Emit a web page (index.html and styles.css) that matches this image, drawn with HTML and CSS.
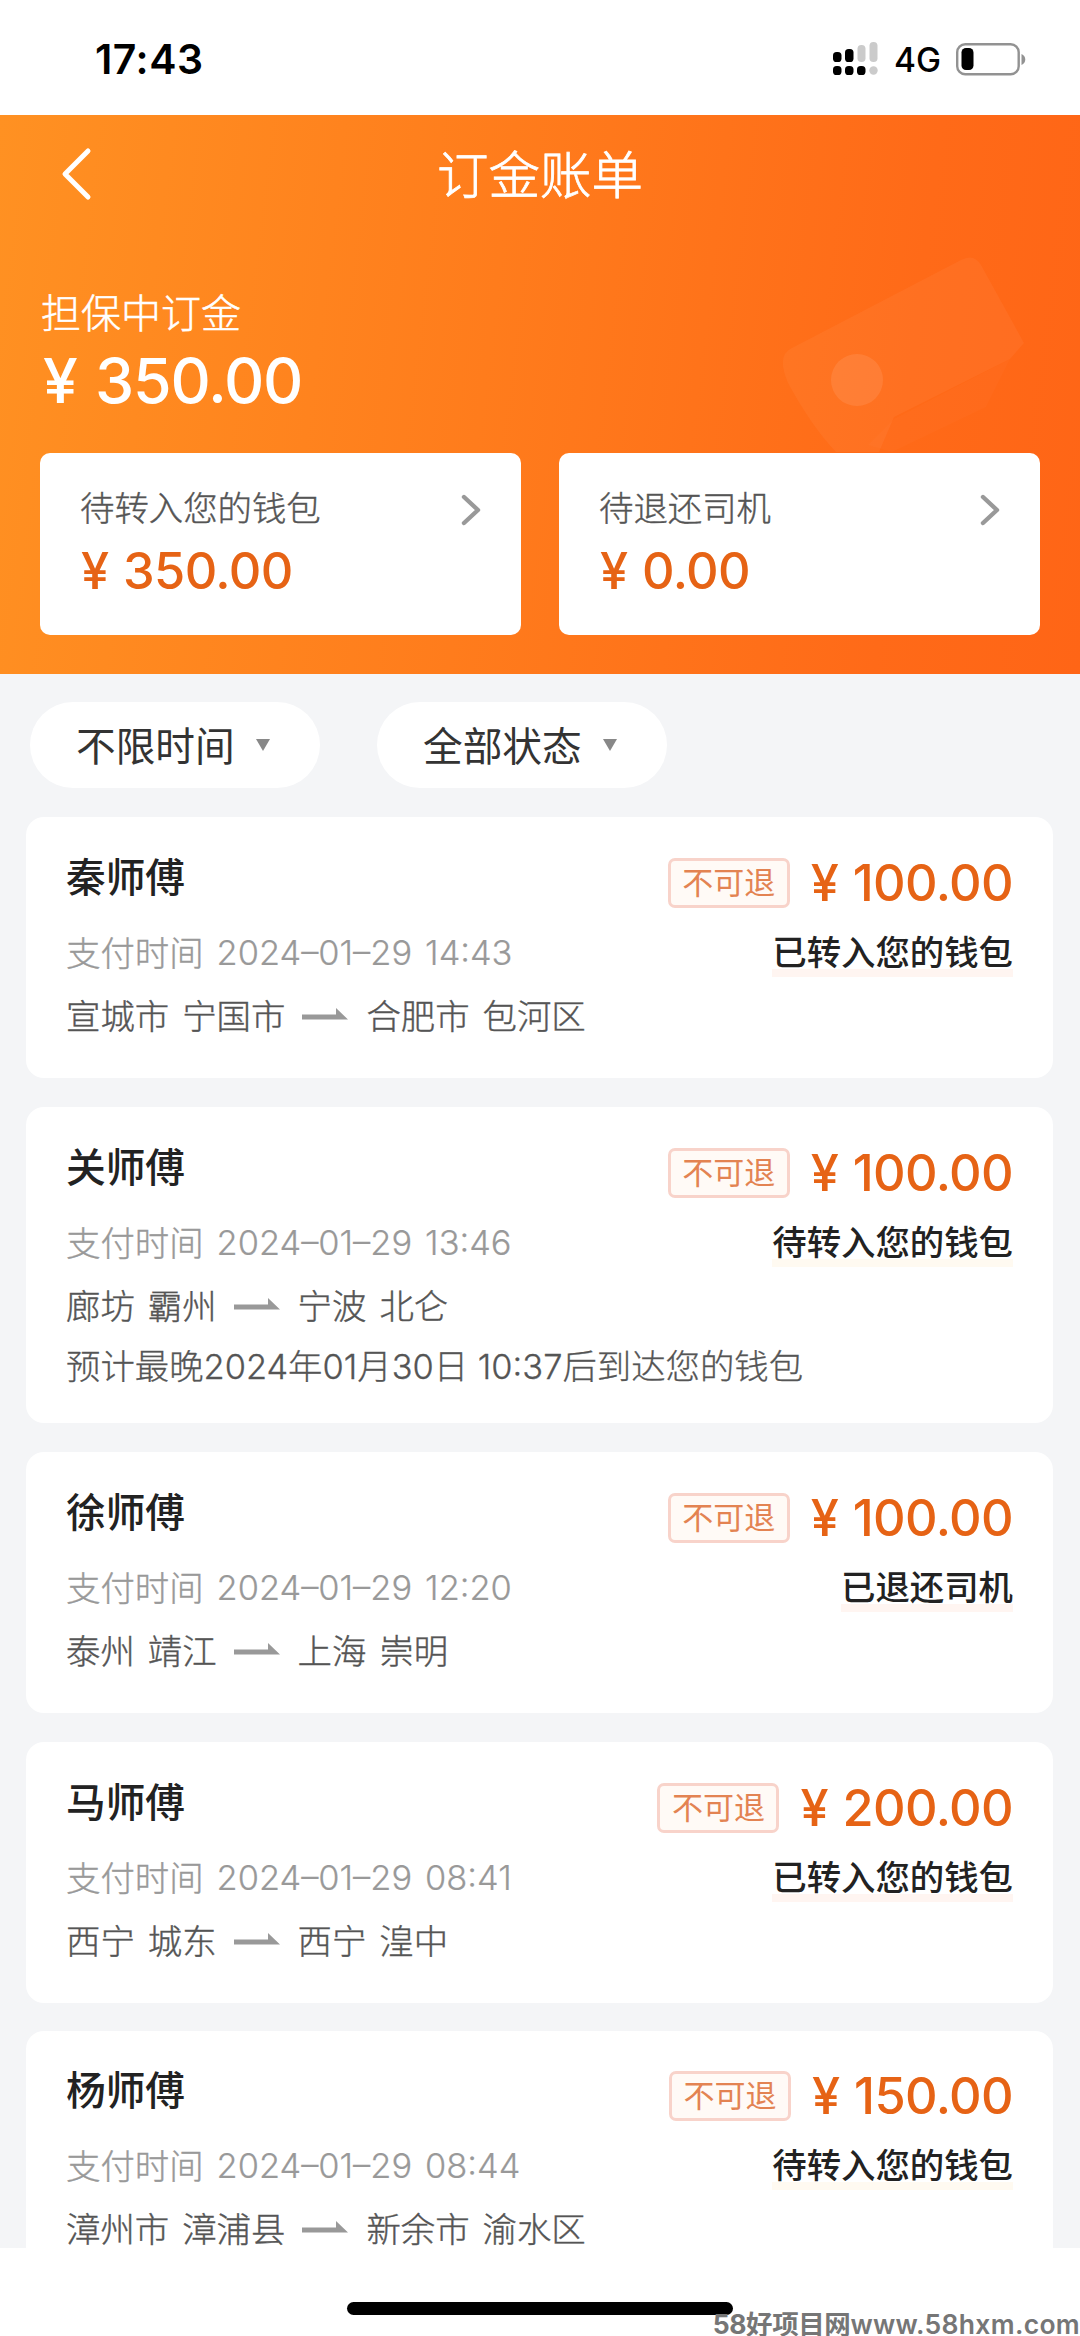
FILE: index.html
```
<!DOCTYPE html>
<html lang="zh-CN">
<head>
<meta charset="utf-8">
<title>订金账单</title>
<link rel="stylesheet" href="styles.css">
</head>
<body>
<svg class="defs" width="0" height="0">
  <symbol id="arrow" viewBox="0 0 46 12"><path d="M0 6.500H34V0L46 11.500H0Z" fill="#999"/></symbol>
  <symbol id="chevron" viewBox="0 0 20 32"><path d="M3 3L17 16L3 29" fill="none" stroke="#999" stroke-width="4.400" stroke-linecap="round" stroke-linejoin="round"/></symbol>
</svg>
<div class="statusbar">
  <span class="clock">17:43</span>
  <div class="indicators">
    <svg class="signal" width="46" height="34" viewBox="0 0 46 34">
      <g fill="#000"><rect x="0" y="10" width="8.500" height="10" rx="3.600"/><rect x="12" y="7" width="8.500" height="13" rx="3.600"/><rect x="0" y="24" width="8.500" height="9" rx="3.600"/><rect x="12" y="24" width="8.500" height="9" rx="3.600"/><rect x="24" y="24" width="8.500" height="9" rx="3.600"/></g>
      <g fill="#cbcbcb"><rect x="24.500" y="3" width="8" height="17" rx="3.800"/><rect x="36.500" y="0" width="8" height="20" rx="3.800"/><circle cx="40.500" cy="28.500" r="4.200"/></g>
    </svg>
    <span class="network">4G</span>
    <svg class="battery" width="70" height="34" viewBox="0 0 70 34">
      <rect x="1.200" y="2.200" width="61.500" height="30" rx="8" fill="none" stroke="#929292" stroke-width="2.400"/>
      <rect x="5.500" y="6" width="12" height="22" rx="4.500" fill="#000"/>
      <path d="M65.500 12C70.500 14 70.500 21 65.500 23Z" fill="#929292"/>
    </svg>
  </div>
</div>
<header class="hero">
  <svg class="ticket" width="270" height="210" viewBox="0 0 270 210">
    <path d="M28 101L197 13Q210 6 217 18L260 96L246 112L130 170L115 205H72Q48 180 24 136Q12 108 28 101Z" fill="#fff" fill-opacity=".045"/>
    <path d="M246 112L130 172L104 198L128 205L222 160Z" fill="#fff" fill-opacity=".02"/>
    <circle cx="93" cy="133" r="26" fill="#fff" fill-opacity=".09"/>
  </svg>
  <div class="navbar">
    <svg class="back" width="34" height="56" viewBox="0 0 34 56"><path d="M29 4L6 27L29 50" fill="none" stroke="#fff" stroke-width="5" stroke-linecap="round" stroke-linejoin="round"/></svg>
    <h1>订金账单</h1>
  </div>
  <div class="held">
    <div class="held-label">担保中订金</div>
    <div class="held-sum"><span class="yen">¥</span>350.00</div>
  </div>
  <div class="wallets">
    <div class="wallet">
      <div class="wallet-label">待转入您的钱包<svg width="20" height="32"><use href="#chevron"/></svg></div>
      <div class="sum"><span class="yen">¥</span>350.00</div>
    </div>
    <div class="wallet">
      <div class="wallet-label">待退还司机<svg width="20" height="32"><use href="#chevron"/></svg></div>
      <div class="sum"><span class="yen">¥</span>0.00</div>
    </div>
  </div>
</header>
<main class="bills">
  <div class="filters">
    <div class="filter"><span>不限时间</span><i></i></div>
    <div class="filter"><span>全部状态</span><i></i></div>
  </div>
  <section class="bill">
    <div class="row head"><span class="name">秦师傅</span><div class="price"><span class="badge">不可退</span><div class="sum"><span class="yen">¥</span>100.00</div></div></div>
    <div class="row pay"><span class="label">支付时间</span><span class="date">2024–01–29</span><span class="time">14:43</span><span class="state pink">已转入您的钱包</span></div>
    <div class="row route"><span>宣城市</span><span>宁国市</span><svg width="46" height="12"><use href="#arrow"/></svg><span>合肥市</span><span>包河区</span></div>
  </section>
  <section class="bill">
    <div class="row head"><span class="name">关师傅</span><div class="price"><span class="badge">不可退</span><div class="sum"><span class="yen">¥</span>100.00</div></div></div>
    <div class="row pay"><span class="label">支付时间</span><span class="date">2024–01–29</span><span class="time">13:46</span><span class="state">待转入您的钱包</span></div>
    <div class="row route"><span>廊坊</span><span>霸州</span><svg width="46" height="12"><use href="#arrow"/></svg><span>宁波</span><span>北仑</span></div>
    <div class="row eta">预计最晚2024年01月30日 10:37后到达您的钱包</div>
  </section>
  <section class="bill">
    <div class="row head"><span class="name">徐师傅</span><div class="price"><span class="badge">不可退</span><div class="sum"><span class="yen">¥</span>100.00</div></div></div>
    <div class="row pay"><span class="label">支付时间</span><span class="date">2024–01–29</span><span class="time">12:20</span><span class="state pink">已退还司机</span></div>
    <div class="row route"><span>泰州</span><span>靖江</span><svg width="46" height="12"><use href="#arrow"/></svg><span>上海</span><span>崇明</span></div>
  </section>
  <section class="bill">
    <div class="row head"><span class="name">马师傅</span><div class="price"><span class="badge">不可退</span><div class="sum"><span class="yen">¥</span>200.00</div></div></div>
    <div class="row pay"><span class="label">支付时间</span><span class="date">2024–01–29</span><span class="time">08:41</span><span class="state pink">已转入您的钱包</span></div>
    <div class="row route"><span>西宁</span><span>城东</span><svg width="46" height="12"><use href="#arrow"/></svg><span>西宁</span><span>湟中</span></div>
  </section>
  <section class="bill">
    <div class="row head"><span class="name">杨师傅</span><div class="price"><span class="badge">不可退</span><div class="sum"><span class="yen">¥</span>150.00</div></div></div>
    <div class="row pay"><span class="label">支付时间</span><span class="date">2024–01–29</span><span class="time">08:44</span><span class="state">待转入您的钱包</span></div>
    <div class="row route"><span>漳州市</span><span>漳浦县</span><svg width="46" height="12"><use href="#arrow"/></svg><span>新余市</span><span>渝水区</span></div>
  </section>
</main>
<footer class="bottom">
  <div class="home"></div>
  <div class="site"><span class="site-name">58好项目网</span><span class="site-url">www.58hxm.com</span></div>
</footer>
</body>
</html>
```
FILE: styles.css
```
* { box-sizing: border-box; }
body {
  margin: 0;
  width: 1080px;
  height: 2336px;
  overflow: hidden;
  background: #fff;
  font-family: Inter, "Noto Sans CJK SC", sans-serif;
  color: #333;
}
svg { display: block; flex: none; }
.defs { position: absolute; }

.statusbar {
  height: 115px;
  display: flex;
  justify-content: space-between;
  padding: 34px 54px 0 95px;
  color: #000;
}
.clock { font-size: 41px; font-weight: 600; line-height: 50px; letter-spacing: .5px; }
.indicators { display: flex; height: 50px; align-items: center; }
.network { font-size: 33.500px; font-weight: 450; margin: 2px 15px 0 15px; line-height: 40px; }

.hero {
  position: relative;
  height: 559px;
  padding: 33px 40px 0;
  background: linear-gradient(97deg, #ff9122 0%, #ff7c1c 45%, #ff6a18 82%, #ff6516 100%);
  color: #fff;
}
.ticket { position: absolute; left: 764px; top: 132px; }
.navbar { position: relative; display: flex; height: 54px; align-items: center; padding-left: 19px; }
.navbar h1 {
  position: absolute;
  inset: 0;
  margin: 0;
  text-align: center;
  font-size: 51.500px;
  line-height: 54px;
  font-weight: 300;
  -webkit-text-stroke: .8px currentColor;
}
.held { position: relative; padding: 86px 0 0 1px; }
.held-label { font-size: 40px; line-height: 52px; font-weight: 300; -webkit-text-stroke: .5px currentColor; }
.held-sum { font-size: 62.500px; line-height: 72px; font-weight: 500; letter-spacing: -1.200px; padding: 4px 0 0 2px; display: flex; margin-bottom: 37px; }
.held-sum .yen { width: 52px; }
.wallets { position: relative; display: grid; grid-template-columns: 1fr 1fr; gap: 38px; }
.wallet { height: 182px; border-radius: 10px; background: #fff; padding: 32px 40px 0; }
.wallet-label {
  display: flex;
  justify-content: space-between;
  align-items: center;
  height: 48px;
  font-size: 34.400px;
  line-height: 48px;
  font-weight: 300;
  color: #555;
  -webkit-text-stroke: .4px currentColor;
}
.wallet-label svg { margin-top: 2px; }
.sum { display: flex; font-size: 50.500px; line-height: 60px; font-weight: 500; letter-spacing: -.6px; color: #e66315; }
.wallet .sum { padding: 8px 0 0 1px; }
.sum .yen { width: 42px; }

.bills { height: 1574px; padding: 28px 27px 0 26px; background: #f4f5f7; }
.filters { display: flex; gap: 57px; padding-left: 4px; margin-bottom: 29px; }
.filter {
  width: 290px;
  height: 86px;
  border-radius: 43px;
  background: #fff;
  display: flex;
  align-items: center;
  padding-left: 46px;
  gap: 21px;
  font-size: 39.700px;
  color: #333;
}
.filter span { padding-bottom: 4px; }
.filter i { border: 7px solid transparent; border-top: 12px solid #888; border-bottom: 0; }

.bill { height: 261px; margin-bottom: 29px; border-radius: 18px; background: #fff; padding: 30px 40px 0; }
.bill:has(.eta) { height: 316px; }
.bill:last-child { height: 218px; margin: -1px 0 0; padding-top: 29px; border-radius: 18px 18px 0 0; }
.row { display: flex; align-items: center; height: 48px; font-size: 34.400px; }
.head { height: 60px; justify-content: space-between; }
.name { font-size: 39.700px; font-weight: 500; color: #222; padding-bottom: 5px; }
.price { display: flex; align-items: center; padding-top: 12px; }
.badge {
  width: 122px;
  height: 50px;
  border: 3px solid #f8d3ca;
  border-radius: 7px;
  background: #fffaf6;
  color: #e38352;
  font-size: 31px;
  line-height: 43px;
  text-align: center;
  margin-right: 21px;
}
.pay { margin-top: 22px; color: #999; font-weight: 300; }
.label { padding-bottom: 4px; -webkit-text-stroke: .4px currentColor; }
.date, .time { padding-bottom: 1px; margin-left: 13px; -webkit-text-stroke: .2px currentColor; }
.state { margin-left: auto; color: #222; font-weight: 500; line-height: 48px; background: linear-gradient(transparent 40px, #fffaf1 40px); }
.state.pink { background: linear-gradient(transparent 40px, #fff5f1 40px); }
.route { height: 34px; line-height: 34px; margin-top: 23px; gap: 13px; color: #555; font-weight: 300; -webkit-text-stroke: .4px currentColor; }
.route svg { margin: 0 5px 0 4px; position: relative; top: -3px; }
.eta { margin-top: 16px; color: #555; font-weight: 300; white-space: pre; -webkit-text-stroke: .3px currentColor; }

.bottom { position: relative; height: 88px; padding-top: 54px; }
.home { width: 386px; height: 13px; border-radius: 7px; background: #000; margin: 0 auto; }
.site {
  position: absolute;
  right: 0;
  bottom: -5px;
  display: flex;
  font-size: 26.500px;
  line-height: 34px;
  font-weight: 700;
  color: #767676;
}
.site-name { letter-spacing: -.4px; }
.site-url { letter-spacing: .3px; font-weight: 600; }
```
